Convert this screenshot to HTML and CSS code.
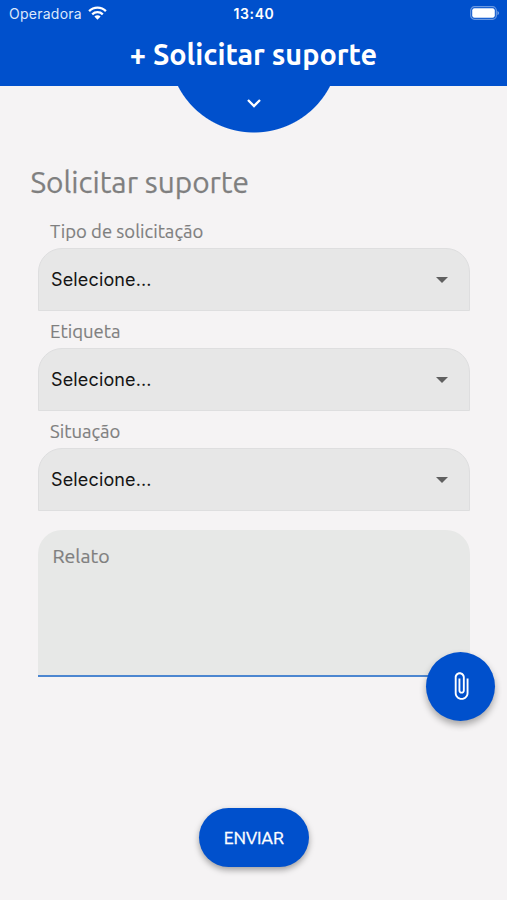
FILE: index.html
```html
<!DOCTYPE html>
<html lang="pt-BR">
<head>
<meta charset="utf-8">
<title>Solicitar suporte</title>
<link rel="stylesheet" href="styles.css">
</head>
<body>
<header class="header">
  <div class="status">
    <div class="carrier"><span class="carrier-name">Operadora</span>
      <svg class="wifi" viewBox="0 0 19 14"><g fill="none" stroke="#fff" stroke-width="2.3"><path d="M1.1 5.1C5.7.5 13.3.5 17.9 5.1"/><path d="M4.2 8.3c3-2.8 7.6-2.8 10.6 0"/></g><path fill="#fff" d="M6.4 10.5c1.8-1.6 4.4-1.6 6.2 0L9.5 13.8z"/></svg>
    </div>
    <span class="clock">13:40</span>
    <svg class="battery" viewBox="0 0 30 14"><rect x=".7" y=".7" width="25.6" height="12.6" rx="3.8" fill="none" stroke="#fff" stroke-opacity=".42" stroke-width="1.2"/><rect x="2.2" y="2.2" width="22.6" height="9.6" rx="2.2" fill="#fff"/><path d="M27.5 4.7q3 2.3 0 4.6z" fill="#fff" fill-opacity=".5"/></svg>
  </div>
  <h1 class="title">+ Solicitar suporte</h1>
  <div class="notch"><svg class="chevron" viewBox="0 0 16 10"><path d="M2 2l6 6 6-6" fill="none" stroke="#fff" stroke-width="2.3"/></svg></div>
</header>
<main class="content">
  <h2 class="heading">Solicitar suporte</h2>
  <form class="form">
    <div class="label">Tipo de solicitação</div>
    <div class="select"><span class="value">Selecione...</span><svg class="arrow" viewBox="0 0 12 6"><path d="M0 0h12L6 6z"/></svg></div>
    <div class="label">Etiqueta</div>
    <div class="select"><span class="value">Selecione...</span><svg class="arrow" viewBox="0 0 12 6"><path d="M0 0h12L6 6z"/></svg></div>
    <div class="label">Situação</div>
    <div class="select"><span class="value">Selecione...</span><svg class="arrow" viewBox="0 0 12 6"><path d="M0 0h12L6 6z"/></svg></div>
    <div class="report"><span class="placeholder">Relato</span>
      <div class="attach"><svg class="clip" viewBox="0 0 24 24"><path d="M16.5 6v11.5c0 2.21-1.79 4-4 4s-4-1.79-4-4V5c0-1.38 1.12-2.5 2.5-2.5s2.5 1.12 2.5 2.5v10.5c0 .55-.45 1-1 1s-1-.45-1-1V6H10v9.5c0 1.38 1.12 2.5 2.5 2.5s2.5-1.12 2.5-2.5V5c0-2.21-1.79-4-4-4S7 2.79 7 5v12.5c0 3.04 2.46 5.5 5.5 5.5s5.5-2.46 5.5-5.5V6z"/></svg></div>
    </div>
    <button class="send" type="button">ENVIAR</button>
  </form>
</main>
</body>
</html>
```
FILE: styles.css
```css
* { box-sizing: border-box; }
body {
  margin: 0;
  height: 900px;
  overflow: hidden;
  background: #f5f3f4;
  font-family: Ubuntu, "Noto Sans", sans-serif;
  color: #7f7f7f;
}
svg { display: block; }
.header { position: relative; height: 86px; background: #0050cc; color: #fff; }
.status {
  display: grid;
  grid-template-columns: 1fr auto 1fr;
  align-items: center;
  height: 28px;
  padding: 0 8px 0 9px;
  font: 14px/28px Inter, sans-serif;
}
.carrier { display: flex; align-items: center; gap: 6px; }
.carrier-name { letter-spacing: .25px; color: #dce8fb; }
.wifi { width: 19px; height: 14px; margin-top: -2px; }
.clock { font-weight: 600; letter-spacing: .6px; }
.battery { width: 30px; height: 14px; justify-self: end; margin: -2px -1px 0 0; }
.title { position: relative; z-index: 1; margin: 7px 0 0; text-align: center; font-size: 28.8px; line-height: 38px; font-weight: 700; white-space: nowrap; }
.notch {
  position: absolute;
  top: 86px;
  left: 168px;
  width: 172px;
  height: 47px;
  overflow: hidden;
  background: radial-gradient(circle at 86px -39px, #0050cc 85px, transparent 86px);
}
.chevron { width: 16px; height: 10px; margin: 11.5px auto 0; }
.content { padding: 76px 37px 0; }
.heading { margin: 0 0 0 -6.5px; font-size: 29.8px; line-height: 40px; font-weight: 400; white-space: nowrap; -webkit-text-stroke: .25px; }
.form { display: flex; flex-direction: column; padding: 16px 0 0 .5px; }
.label { height: 29.5px; padding-left: 12.5px; font-size: 18.5px; line-height: 27px; white-space: nowrap; -webkit-text-stroke: .15px; }
.select {
  display: flex;
  align-items: center;
  justify-content: space-between;
  height: 63.5px;
  margin-bottom: 7px;
  padding: 1px 21px 0 12.5px;
  border: 1px solid #dededf;
  border-radius: 24px 24px 0 0;
  background: #e7e7e7;
}
.value { font: 18px/24px Inter, sans-serif; letter-spacing: .14px; color: #151515; }
.arrow { width: 12px; height: 6px; fill: #606060; }
.report {
  position: relative;
  height: 147.5px;
  margin-top: 11.5px;
  padding: 13px 15px;
  border-bottom: 2px solid #4c86d0;
  border-radius: 24px 24px 0 0;
  background: #e7e8e7;
}
.placeholder { font-size: 19.5px; line-height: 27px; -webkit-text-stroke: .2px; }
.attach {
  position: absolute;
  top: 122px;
  left: 388.5px;
  display: grid;
  place-items: center;
  width: 69px;
  height: 69px;
  border-radius: 50%;
  background: #0050cc;
  box-shadow: 0 4px 7px rgba(0, 0, 0, .32);
}
.clip { width: 30px; height: 30px; fill: #fff; }
.send {
  align-self: center;
  width: 110px;
  height: 59px;
  margin-top: 130.5px;
  padding: 1px 0 0;
  border: 0;
  border-radius: 30px;
  background: #0050cc;
  box-shadow: 0 3px 6px rgba(0, 0, 0, .35);
  color: #fff;
  font: 400 17.5px/24px Ubuntu, "Noto Sans", sans-serif;
  -webkit-text-stroke: .35px;
}
```
